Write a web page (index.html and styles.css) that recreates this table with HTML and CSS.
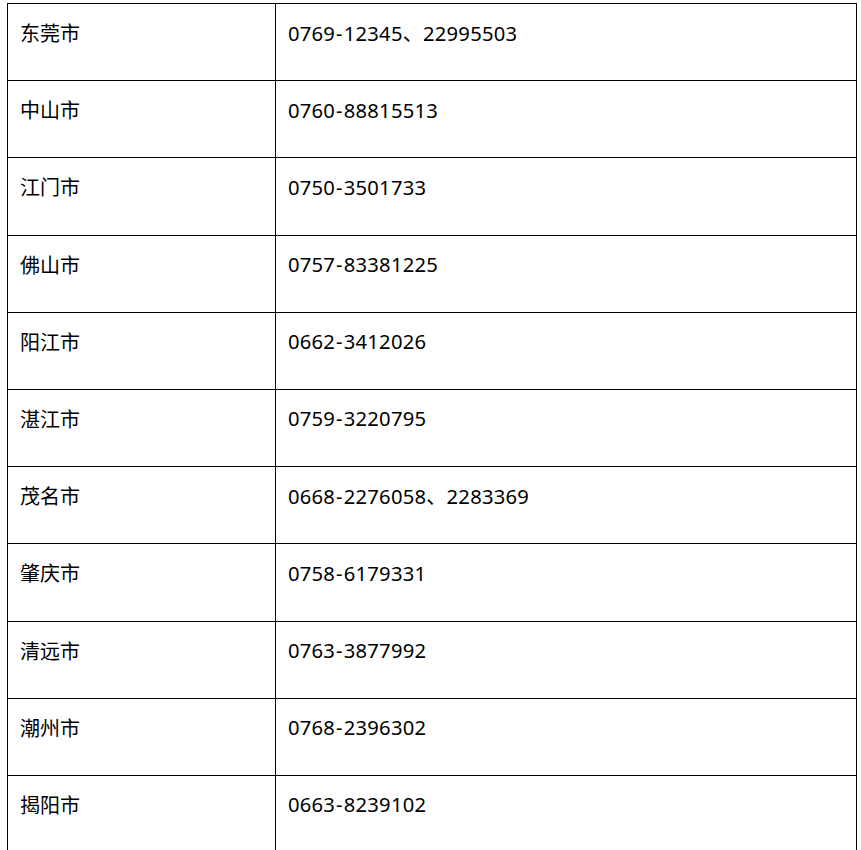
FILE: index.html
```html
<!DOCTYPE html>
<html lang="zh-CN">
<head>
<meta charset="utf-8">
<title>电话列表</title>
<link rel="stylesheet" href="styles.css">
</head>
<body>
<div class="table">
  <div class="cell city">东莞市</div><div class="cell phone">0769<span class="dash">-</span>12345、22995503</div>
  <div class="cell city">中山市</div><div class="cell phone">0760<span class="dash">-</span>88815513</div>
  <div class="cell city">江门市</div><div class="cell phone">0750<span class="dash">-</span>3501733</div>
  <div class="cell city">佛山市</div><div class="cell phone">0757<span class="dash">-</span>83381225</div>
  <div class="cell city">阳江市</div><div class="cell phone">0662<span class="dash">-</span>3412026</div>
  <div class="cell city">湛江市</div><div class="cell phone">0759<span class="dash">-</span>3220795</div>
  <div class="cell city">茂名市</div><div class="cell phone">0668<span class="dash">-</span>2276058、2283369</div>
  <div class="cell city">肇庆市</div><div class="cell phone">0758<span class="dash">-</span>6179331</div>
  <div class="cell city">清远市</div><div class="cell phone">0763<span class="dash">-</span>3877992</div>
  <div class="cell city">潮州市</div><div class="cell phone">0768<span class="dash">-</span>2396302</div>
  <div class="cell city">揭阳市</div><div class="cell phone">0663<span class="dash">-</span>8239102</div>
</div>
</body>
</html>
```
FILE: styles.css
```css
html, body {
  margin: 0;
  padding: 0;
  background: #fff;
}
body {
  padding: 3px 0 0 7px;
  overflow: hidden;
  height: 850px;
  box-sizing: border-box;
}
.table {
  width: 850px;
  box-sizing: border-box;
  display: grid;
  grid-template-columns: 268px 1fr;
  grid-auto-rows: 77.2px;
  border-top: 1px solid #000;
  border-left: 1px solid #000;
  font-family: "Noto Sans", "Noto Sans CJK SC", sans-serif;
  font-size: 20px;
  line-height: 28px;
  color: #000;
}
.cell {
  border-right: 1px solid #000;
  border-bottom: 1px solid #000;
  padding: 15px 12px 0 12px;
  box-sizing: border-box;
}
.city {
  font-family: "Noto Sans CJK SC", sans-serif;
}
.phone {
  font-size: 20.2px;
  letter-spacing: 0.22px;
  padding-top: 14.5px;
}
.dash {
  padding: 0 1px;
}
```
